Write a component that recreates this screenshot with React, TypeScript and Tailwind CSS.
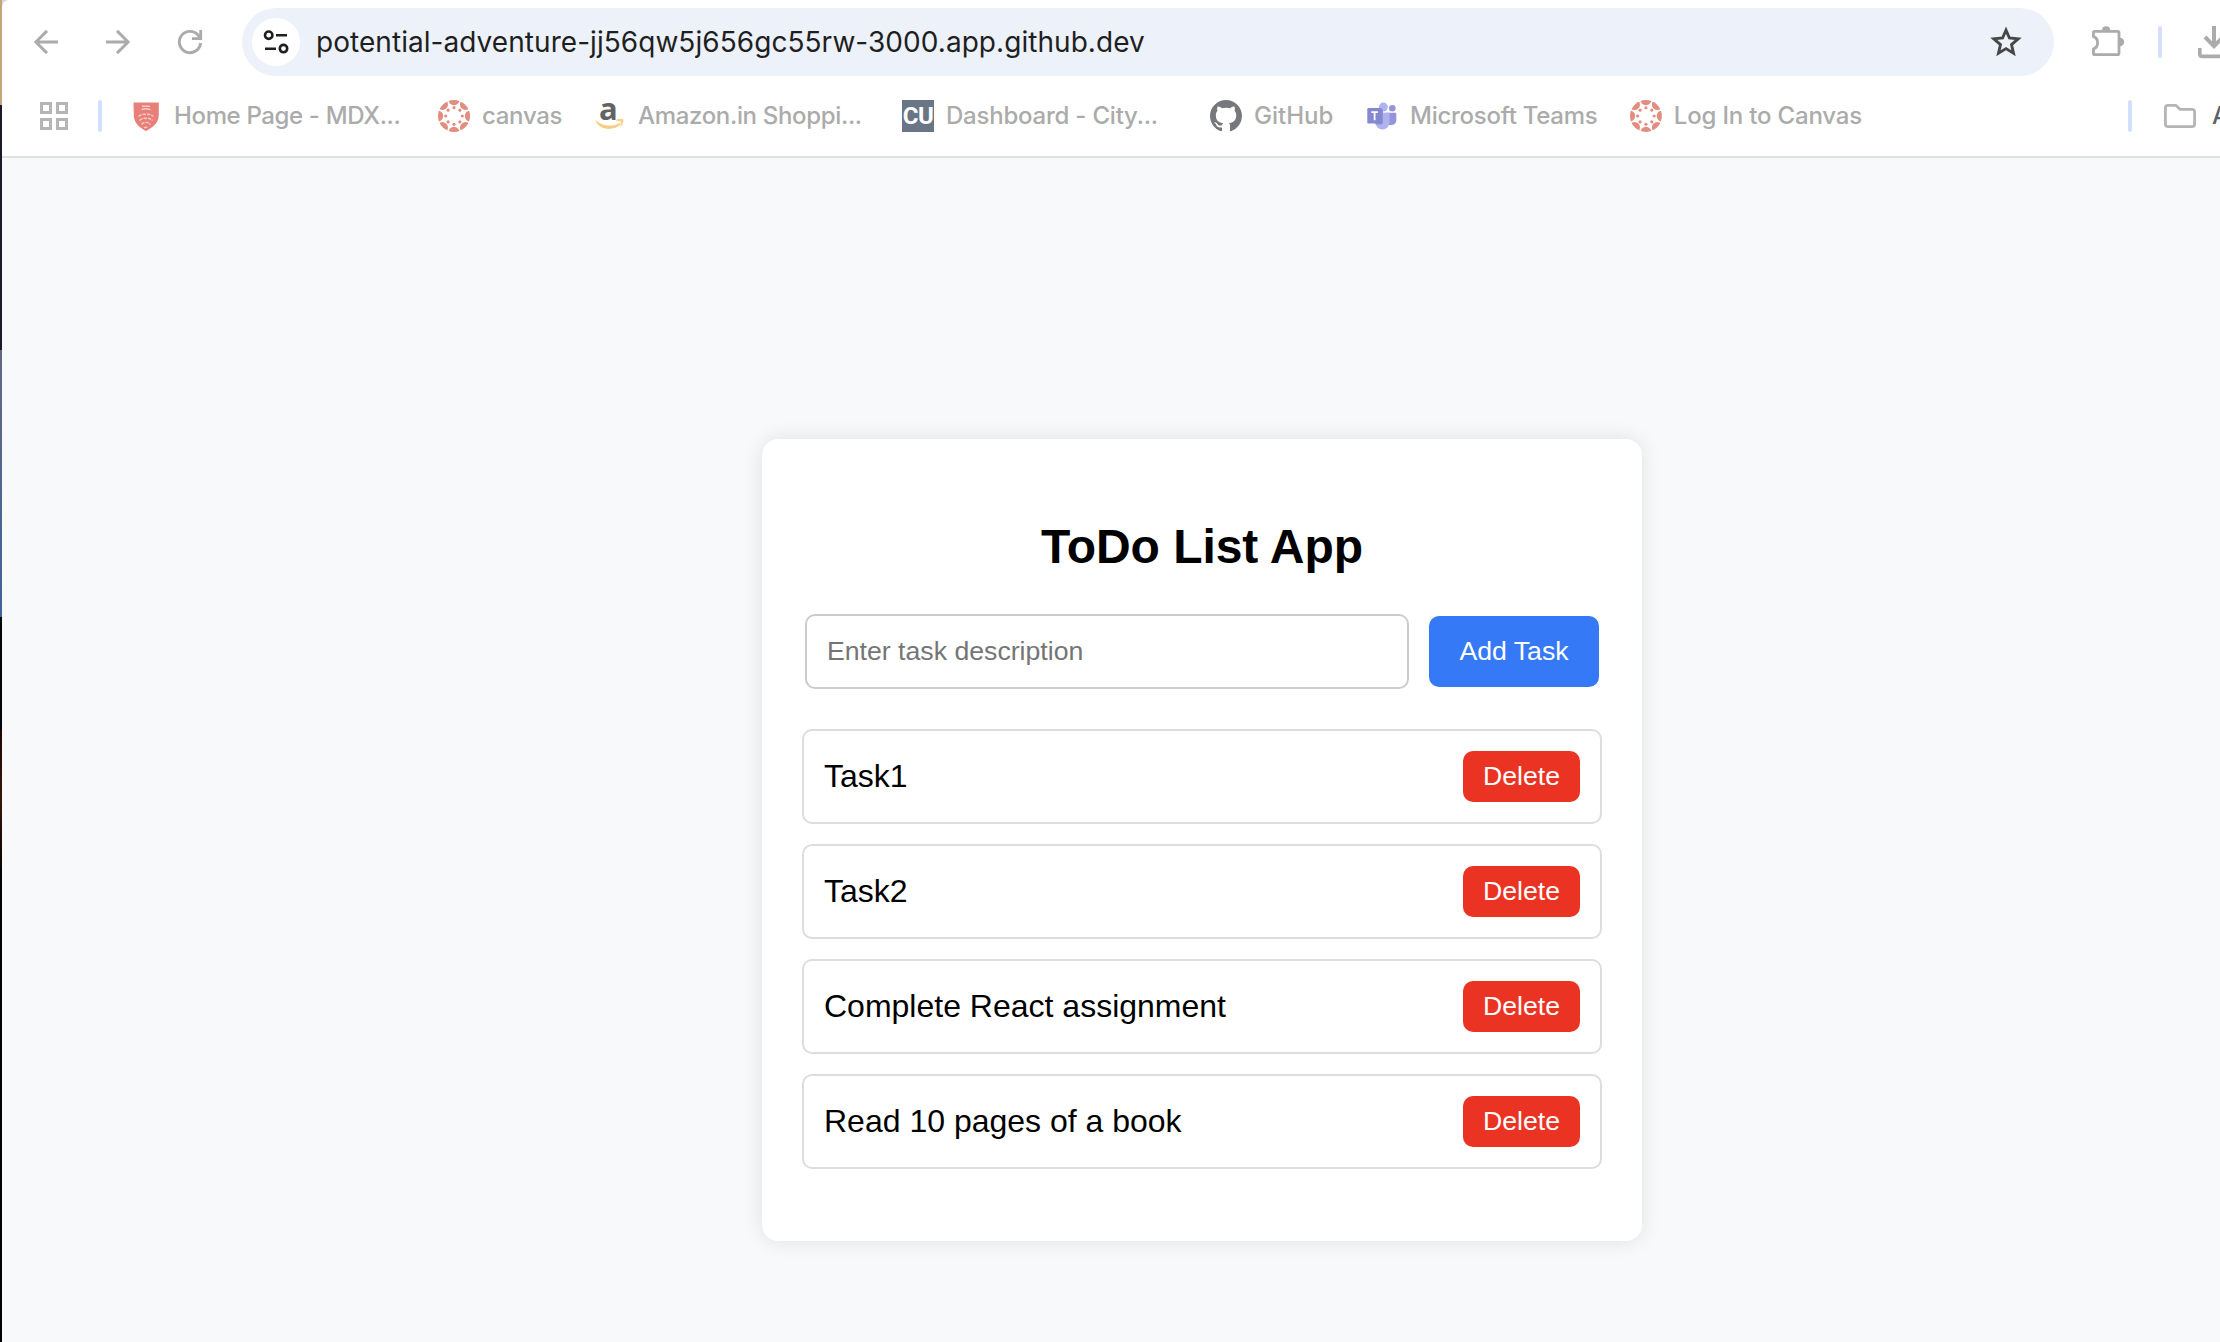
import React from 'react';

function BackIcon() {
  return (
    <svg width="36" height="36" viewBox="0 0 36 36" fill="none" stroke="#ababab" strokeWidth="2.9">
      <path d="M30 18H7M19 6.9L7.9 18L19 29.1" />
    </svg>
  );
}

function ForwardIcon() {
  return (
    <svg width="36" height="36" viewBox="0 0 36 36" fill="none" stroke="#ababab" strokeWidth="2.9">
      <path d="M6 18h23M17 6.9L28.1 18L17 29.1" />
    </svg>
  );
}

function ReloadIcon() {
  return (
    <svg width="36" height="36" viewBox="0 0 36 36" fill="none" stroke="#ababab" strokeWidth="2.9">
      <path d="M28.6 19A10.65 10.65 0 1 1 26 11L28 14" />
      <path d="M28.7 6v8.6H20" />
    </svg>
  );
}

function TuneIcon() {
  return (
    <svg width="28" height="28" viewBox="0 0 28 28" fill="none" stroke="#1f1f1f" strokeWidth="2.6">
      <circle cx="6.7" cy="7.2" r="3.7" />
      <path d="M14 7.3h11M3 20.7h11" />
      <circle cx="21.5" cy="20.6" r="3.7" />
    </svg>
  );
}

function StarIcon() {
  return (
    <svg width="32" height="32" viewBox="0 0 32 32" fill="none" stroke="#474747" strokeWidth="2.9">
      <path d="M16 4.2L19.4 12L28.2 12.8L21.5 18.6L23.5 27.2L16 22.6L8.5 27.2L10.5 18.6L3.8 12.8L12.6 12Z" />
    </svg>
  );
}

function ExtensionIcon() {
  return (
    <svg width="36" height="36" viewBox="0 0 36 36">
      <path d="M12 6.3a4.1 4.1 0 0 1 8.2 0zM30 13.8a4.2 4.2 0 0 1 0 8.4z" fill="#ababab" />
      <path
        d="M3.4 10.6V8.6Q3.4 7.3 4.700 7.3H27.7Q29 7.3 29 8.6V29.300Q29 30.700 27.7 30.700H4.700Q3.4 30.700 3.4 29.300V24.800C9 23.300 9 14.200 3.4 12.600Z"
        fill="none"
        stroke="#ababab"
        strokeWidth="2.8"
        strokeLinejoin="round"
      />
    </svg>
  );
}

function DownloadIcon() {
  return (
    <svg width="36" height="36" viewBox="0 0 36 36" fill="none" stroke="#ababab" strokeWidth="4">
      <path d="M18 2v20M9 13l9 9.2L27 13" />
      <path d="M3.8 24V30Q3.8 32.4 6.2 32.4H29.8Q32.2 32.4 32.2 30V24" strokeWidth="3.6" />
    </svg>
  );
}

function AppsIcon() {
  return (
    <svg className="shrink-0" width="28" height="28" viewBox="0 0 28 28" fill="none" stroke="#b5b5b5" strokeWidth="3">
      <path d="M1.5 1.5h9v9h-9zM17.5 1.5h9v9h-9zM1.5 17.5h9v9h-9zM17.5 17.5h9v9h-9z" />
    </svg>
  );
}

function FolderIcon() {
  return (
    <svg className="shrink-0" width="32" height="32" viewBox="0 0 32 32" fill="none" stroke="#b5b5b5" strokeWidth="2.8" strokeLinejoin="round">
      <path d="M4 5.4H12L16.2 9.4H28Q30.6 9.4 30.6 12V24Q30.6 26.6 28 26.6H4Q1.4 26.6 1.4 24V8Q1.4 5.4 4 5.4Z" />
    </svg>
  );
}

function ShieldIcon() {
  return (
    <svg width="32" height="32" viewBox="0 0 32 32">
      <path d="M3.5 2.5H28.8V15C28.8 23.5 22 27.5 16 31C10 27.5 3.8 23.5 3.8 15Z" fill="#e87f79" />
      <g fill="none" stroke="#f6cbc8" strokeWidth="1.4">
        <path d="M12 6.3h8M11.5 9.6q4.5-1.6 9 0" />
        <path d="M8.500 16.500q3.700-3 7.500-2q3.800-1 7.500 2M9.500 20.500q3.500-3 6.500-2q3-1 6.500 2M11.500 24.500q2.500-2.500 4.500-2q2-.5 4.500 2M14 28q2-1.500 4 0" strokeDasharray="3.500 1" />
      </g>
    </svg>
  );
}

const SPOKES = [0, 45, 90, 135, 180, 225, 270, 315];

function CanvasIcon() {
  return (
    <svg width="32" height="32" viewBox="0 0 32 32" fill="#e38d81">
      <clipPath id="canvas-disc">
        <circle cx="16" cy="16" r="16" />
      </clipPath>
      <g clipPath="url(#canvas-disc)">
        {SPOKES.map((a) => (
          <g key={a} transform={`rotate(${a} 16 16)`}>
            <circle cx="16" cy="-0.4" r="5.6" />
            <circle cx="16" cy="7.700" r="1.600" />
          </g>
        ))}
      </g>
    </svg>
  );
}

function AmazonIcon() {
  return (
    <svg width="32" height="32" viewBox="0 0 32 32">
      <text x="14.4" y="19.6" textAnchor="middle" fontFamily="Open Sans" fontWeight="700" fontSize="31" fill="#636363">
        a
      </text>
      <path d="M2 20.500C8 26.500 19 27 26.200 23L27 24.300C20 30.800 7.500 31 1.800 21.800Z" fill="#f7cd86" />
      <path d="M21.500 20.300C24.500 18.300 28 18.600 29.200 19.300C30 21.500 28.600 25.500 26.600 27C26.500 25 27.800 23 27 21.800C25.500 20.800 23.500 21 21.500 20.300Z" fill="#f9d08c" />
    </svg>
  );
}

function CityIcon() {
  return (
    <span className="flex size-8 items-center justify-center bg-[#6a7686]">
      <span className="font-['Roboto'] text-[24px] leading-8 font-bold tracking-[-0.5px] text-white">CU</span>
    </span>
  );
}

function GithubIcon() {
  return (
    <svg width="32" height="32" viewBox="0 0 16 16" fill="#77787c">
      <path d="M8 0C3.58 0 0 3.58 0 8c0 3.54 2.29 6.53 5.47 7.59.4.07.55-.17.55-.38 0-.19-.01-.82-.01-1.49-2.01.37-2.53-.49-2.69-.94-.09-.23-.48-.94-.82-1.13-.28-.15-.68-.52-.01-.53.63-.01 1.08.58 1.23.82.72 1.21 1.87.87 2.33.66.07-.52.28-.87.51-1.07-1.78-.2-3.64-.89-3.64-3.95 0-.87.31-1.59.82-2.15-.08-.2-.36-1.02.08-2.12 0 0 .67-.21 2.2.82.64-.18 1.32-.27 2-.27.68 0 1.36.09 2 .27 1.53-1.04 2.2-.82 2.2-.82.44 1.1.16 1.92.08 2.12.51.56.82 1.27.82 2.15 0 3.07-1.87 3.75-3.65 3.95.29.25.54.73.54 1.48 0 1.07-.01 1.93-.01 2.2 0 .21.15.46.55.38A8.01 8.01 0 0 0 16 8c0-4.42-3.58-8-8-8z" />
    </svg>
  );
}

function TeamsIcon() {
  return (
    <svg width="32" height="32" viewBox="0 0 32 32">
      <circle cx="26.300" cy="8.300" r="3.300" fill="#9494dd" />
      <path d="M19 12.800H29.600Q30.300 12.800 30.300 13.500V20.300A5 5 0 0 1 20.500 21.500Z" fill="#9494dd" />
      <circle cx="17.400" cy="7.100" r="4.500" fill="#b0b2ef" />
      <path d="M10.500 12.800H22.800Q23.500 12.800 23.500 13.500V22.500A7 7 0 0 1 9.500 22.500Z" fill="#b0b2ef" />
      <path d="M9.500 9H15.800Q17 9 17 10.200V22.500Q17 24.500 15 24.500H9.500Z" fill="#9092d6" />
      <rect x="1.300" y="8" width="14.400" height="15.600" rx="1.200" fill="#8587cf" />
      <path d="M5.300 12.200h6.600M8.600 12.200v8" stroke="#fff" strokeWidth="1.800" fill="none" />
    </svg>
  );
}

function Divider() {
  return <span className="h-8 w-1 shrink-0 rounded-full bg-[#d3e0fb]" />;
}

const BOOKMARKS = [
  { label: 'Home Page - MDX...', icon: <ShieldIcon />, box: 'w-[308px]', track: 'tracking-[-0.36px]' },
  { label: 'canvas', icon: <CanvasIcon />, box: 'w-[156px]', track: 'tracking-[-0.3px]' },
  { label: 'Amazon.in Shoppi...', icon: <AmazonIcon />, box: 'w-[308px]', track: 'tracking-[-0.33px]' },
  { label: 'Dashboard - City...', icon: <CityIcon />, box: 'w-[308px]', track: 'tracking-[-0.22px]' },
  { label: 'GitHub', icon: <GithubIcon />, box: 'w-[156px]', track: 'tracking-[0px]' },
  { label: 'Microsoft Teams', icon: <TeamsIcon />, box: 'w-[264px]', track: 'tracking-[-0.26px]' },
  { label: 'Log In to Canvas', icon: <CanvasIcon />, box: 'w-[232px]', track: 'tracking-[-0.18px]' },
];

const TASKS = ['Task1', 'Task2', 'Complete React assignment', 'Read 10 pages of a book'];

function Toolbar() {
  return (
    <div className="flex h-[84px] items-center pl-[26px]">
      <div className="flex gap-9">
        <BackIcon />
        <ForwardIcon />
        <ReloadIcon />
      </div>
      <div className="ml-[34px] flex h-[68px] w-[1812px] shrink-0 items-center rounded-full bg-[#edf2fa] pr-8 pl-[10px]">
        <span className="flex size-12 items-center justify-center rounded-full bg-white">
          <TuneIcon />
        </span>
        <span className="ml-4 flex-1 text-[28px] leading-8 tracking-[0.05px] text-[#1f1f1f]">
          potential-adventure-jj56qw5j656gc55rw-3000.app.github.dev
        </span>
        <StarIcon />
      </div>
      <div className="ml-9 flex shrink-0 items-center">
        <ExtensionIcon />
        <span className="ml-8 flex">
          <Divider />
        </span>
        <span className="ml-[34px]">
          <DownloadIcon />
        </span>
      </div>
    </div>
  );
}

function BookmarksBar() {
  return (
    <div className="flex h-16 items-center pl-[38px] text-[24px] leading-8 font-[450] whitespace-nowrap text-[#ababab]">
      <AppsIcon />
      <span className="mr-7 ml-[30px] flex">
        <Divider />
      </span>
      {BOOKMARKS.map((b) => (
        <div key={b.label} className={`flex shrink-0 items-center gap-3 ${b.box}`}>
          {b.icon}
          <span className={b.track}>{b.label}</span>
        </div>
      ))}
      <span className="ml-[266px] flex">
        <Divider />
      </span>
      <span className="ml-8 flex shrink-0 items-center gap-4 text-[#5f6368]">
        <FolderIcon />
        <span>All Bookmarks</span>
      </span>
    </div>
  );
}

function TodoCard() {
  return (
    <main className="h-[802px] w-[880px] rounded-[16px] bg-white px-10 pt-20 font-['Liberation_Sans',Arial,sans-serif] shadow-[0_0_20px_rgba(0,0,0,0.1)]">
      <h1 className="h-14 text-center text-5xl leading-14 font-bold tracking-[-0.05px] text-black">ToDo List App</h1>
      <div className="mt-[39px] flex items-center gap-5 px-[3px] text-[26.667px] leading-8">
        <input
          className="h-[75px] w-[604px] rounded-[10px] border-2 border-[#ccc] px-5 outline-none placeholder:text-[#757575]"
          placeholder="Enter task description"
        />
        <button className="h-[71px] w-[170px] rounded-[10px] bg-[#3579f6] pb-0.5 text-white">Add Task</button>
      </div>
      <ul className="mt-10 flex flex-col gap-5">
        {TASKS.map((task) => (
          <li key={task} className="flex h-[95px] items-center justify-between rounded-[10px] border-2 border-[#ddd] px-5 text-[32px] text-black">
            <span className="pb-0.5">{task}</span>
            <button className="h-[51px] w-[117px] rounded-[10px] bg-[#eb3324] pb-0.5 text-[26.667px] leading-8 text-white">Delete</button>
          </li>
        ))}
      </ul>
    </main>
  );
}

export default function App() {
  return (
    <div className="flex h-[1342px] w-[2220px] overflow-hidden bg-[#d3dade] font-['Inter',sans-serif]">
      <div className="flex w-[2px] shrink-0 flex-col">
        <div className="h-[105px] bg-[#c3a578]" />
        <div className="h-[245px] bg-[#1c1928]" />
        <div className="h-[267px] bg-linear-to-b from-[#646684] to-[#3f639c]" />
        <div className="h-[113px] bg-[#05060c]" />
        <div className="h-[140px] bg-linear-to-b from-[#1c0804] via-[#3a1408] to-[#0a0404]" />
        <div className="flex-1 bg-[#020208]" />
      </div>
      <div className="flex w-[2218px] flex-col overflow-hidden rounded-tl-[8px] bg-[#f8f9fb]">
        <header className="h-[158px] shrink-0 overflow-hidden border-b-2 border-[#dfe1e1] bg-white">
          <Toolbar />
          <BookmarksBar />
        </header>
        <div className="flex flex-1 items-start pt-[281px] pl-[760px]">
          <TodoCard />
        </div>
      </div>
    </div>
  );
}
